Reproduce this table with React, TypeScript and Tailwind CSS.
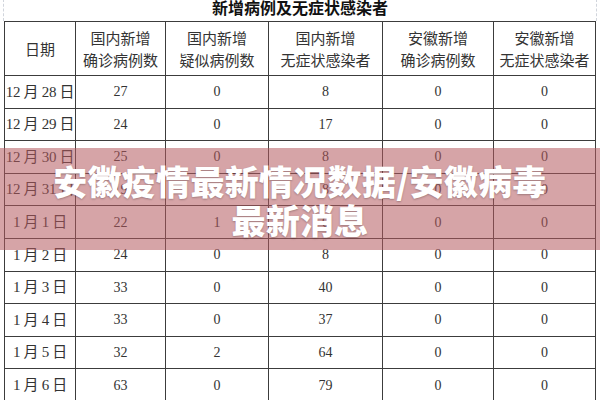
const headers = [
  ["日期"],
  ["国内新增", "确诊病例数"],
  ["国内新增", "疑似病例数"],
  ["国内新增", "无症状感染者"],
  ["安徽新增", "确诊病例数"],
  ["安徽新增", "无症状感染者"],
];

const rows = [
  ["12 月 28 日", "27", "0", "8", "0", "0"],
  ["12 月 29 日", "24", "0", "17", "0", "0"],
  ["12 月 30 日", "25", "0", "8", "0", "0"],
  ["12 月 31 日", "19", "1", "8", "0", "0"],
  ["1 月 1 日", "22", "1", "0", "0", "0"],
  ["1 月 2 日", "24", "0", "8", "0", "0"],
  ["1 月 3 日", "33", "0", "40", "0", "0"],
  ["1 月 4 日", "33", "0", "37", "0", "0"],
  ["1 月 5 日", "32", "2", "64", "0", "0"],
  ["1 月 6 日", "63", "0", "79", "0", "0"],
];

const widths = [71, 90, 103, 114, 111, 102];

export default function App() {
  return (
    <div className="relative w-[600px] h-[400px] overflow-hidden bg-white">
      <div className="mx-[3px] h-[22px] border-x border-dashed border-gray-300 text-center">
        <span className="block -mt-[1px] text-[16px] leading-[17px] font-bold text-[#111] font-['Noto_Sans_CJK_SC',sans-serif]">
          新增病例及无症状感染者
        </span>
      </div>

      <table className="ml-[4px] w-[591px] table-fixed border-collapse text-[#333]">
        <colgroup>
          {widths.map((w, i) => (
            <col key={i} style={{ width: w }} />
          ))}
        </colgroup>
        <thead>
          <tr className="h-[54px]">
            {headers.map((h, i) => (
              <th
                key={i}
                className="border border-[#3c3c3c] p-0 text-center align-middle text-[15px] leading-[22px] font-normal font-['Noto_Sans_CJK_SC',sans-serif]"
              >
                {h.map((line) => (
                  <div key={line}>{line}</div>
                ))}
              </th>
            ))}
          </tr>
        </thead>
        <tbody>
          {rows.map((r, ri) => (
            <tr key={ri} className="h-[32.6px]">
              {r.map((c, ci) => (
                <td
                  key={ci}
                  className={
                    ci === 0
                      ? "border border-[#3c3c3c] p-0 text-center whitespace-nowrap text-[15px] tracking-[-0.3px] font-['Liberation_Serif','Noto_Sans_CJK_SC',serif]"
                      : "border border-[#3c3c3c] p-0 text-center text-[14px] font-['Liberation_Serif',serif]"
                  }
                >
                  {c}
                </td>
              ))}
            </tr>
          ))}
        </tbody>
      </table>

      <div className="absolute left-0 top-[148px] w-full h-[102px] bg-[rgba(180,90,95,0.55)] flex flex-col items-center justify-center">
        <div className="pt-[2px] text-white text-[34px] leading-[39px] font-black tracking-[0.3px] font-['Noto_Sans_CJK_SC',sans-serif] text-center [text-shadow:0_1px_2px_rgba(0,0,0,0.25)]">
          <div>安徽疫情最新情况数据/安徽病毒</div>
          <div>最新消息</div>
        </div>
      </div>
    </div>
  );
}
